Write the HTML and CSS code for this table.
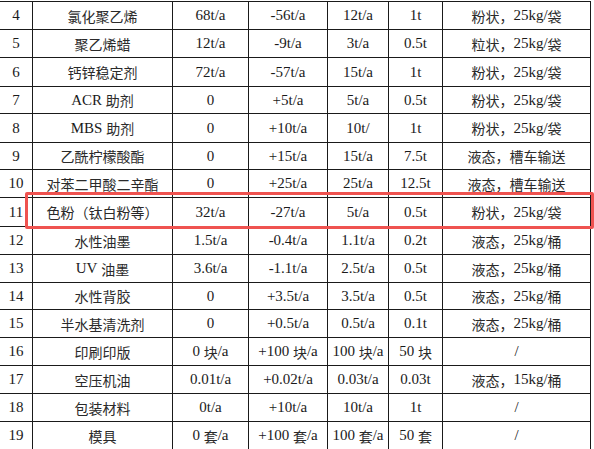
FILE: index.html
```html
<!DOCTYPE html>
<html lang="zh-CN">
<head>
<meta charset="utf-8">
<title>原辅材料表</title>
<link rel="stylesheet" href="styles.css">
</head>
<body>
<div class="sheet">
  <div class="table">
    <div class="c">4</div><div class="c"><span class="zh">氯化聚乙烯</span></div><div class="c">68t/a</div><div class="c">-56t/a</div><div class="c">12t/a</div><div class="c">1t</div><div class="c"><span class="zh">粉状，</span>25kg/<span class="zh">袋</span></div>
    <div class="c">5</div><div class="c"><span class="zh">聚乙烯蜡</span></div><div class="c">12t/a</div><div class="c">-9t/a</div><div class="c">3t/a</div><div class="c">0.5t</div><div class="c"><span class="zh">粒状，</span>25kg/<span class="zh">袋</span></div>
    <div class="c">6</div><div class="c"><span class="zh">钙锌稳定剂</span></div><div class="c">72t/a</div><div class="c">-57t/a</div><div class="c">15t/a</div><div class="c">1t</div><div class="c"><span class="zh">粉状，</span>25kg/<span class="zh">袋</span></div>
    <div class="c">7</div><div class="c">ACR&nbsp;<span class="zh">助剂</span></div><div class="c">0</div><div class="c">+5t/a</div><div class="c">5t/a</div><div class="c">0.5t</div><div class="c"><span class="zh">粉状，</span>25kg/<span class="zh">袋</span></div>
    <div class="c">8</div><div class="c">MBS&nbsp;<span class="zh">助剂</span></div><div class="c">0</div><div class="c">+10t/a</div><div class="c">10t/</div><div class="c">1t</div><div class="c"><span class="zh">粉状，</span>25kg/<span class="zh">袋</span></div>
    <div class="c">9</div><div class="c"><span class="zh">乙酰柠檬酸酯</span></div><div class="c">0</div><div class="c">+15t/a</div><div class="c">15t/a</div><div class="c">7.5t</div><div class="c"><span class="zh">液态，槽车输送</span></div>
    <div class="c">10</div><div class="c"><span class="zh">对苯二甲酸二辛酯</span></div><div class="c">0</div><div class="c">+25t/a</div><div class="c">25t/a</div><div class="c">12.5t</div><div class="c"><span class="zh">液态，槽车输送</span></div>
    <div class="c">11</div><div class="c"><span class="zh">色粉（钛白粉等）</span></div><div class="c">32t/a</div><div class="c">-27t/a</div><div class="c">5t/a</div><div class="c">0.5t</div><div class="c"><span class="zh">粉状，</span>25kg/<span class="zh">袋</span></div>
    <div class="c">12</div><div class="c"><span class="zh">水性油墨</span></div><div class="c">1.5t/a</div><div class="c">-0.4t/a</div><div class="c">1.1t/a</div><div class="c">0.2t</div><div class="c"><span class="zh">液态，</span>25kg/<span class="zh">桶</span></div>
    <div class="c">13</div><div class="c">UV&nbsp;<span class="zh">油墨</span></div><div class="c">3.6t/a</div><div class="c">-1.1t/a</div><div class="c">2.5t/a</div><div class="c">0.5t</div><div class="c"><span class="zh">液态，</span>25kg/<span class="zh">桶</span></div>
    <div class="c">14</div><div class="c"><span class="zh">水性背胶</span></div><div class="c">0</div><div class="c">+3.5t/a</div><div class="c">3.5t/a</div><div class="c">0.5t</div><div class="c"><span class="zh">液态，</span>25kg/<span class="zh">桶</span></div>
    <div class="c">15</div><div class="c"><span class="zh">半水基清洗剂</span></div><div class="c">0</div><div class="c">+0.5t/a</div><div class="c">0.5t/a</div><div class="c">0.1t</div><div class="c"><span class="zh">液态，</span>25kg/<span class="zh">桶</span></div>
    <div class="c">16</div><div class="c"><span class="zh">印刷印版</span></div><div class="c">0&nbsp;<span class="zh">块</span>/a</div><div class="c">+100&nbsp;<span class="zh">块</span>/a</div><div class="c">100&nbsp;<span class="zh">块</span>/a</div><div class="c">50&nbsp;<span class="zh">块</span></div><div class="c">/</div>
    <div class="c">17</div><div class="c"><span class="zh">空压机油</span></div><div class="c">0.01t/a</div><div class="c">+0.02t/a</div><div class="c">0.03t/a</div><div class="c">0.03t</div><div class="c"><span class="zh">液态，</span>15kg/<span class="zh">桶</span></div>
    <div class="c">18</div><div class="c"><span class="zh">包装材料</span></div><div class="c">0t/a</div><div class="c">+10t/a</div><div class="c">10t/a</div><div class="c">1t</div><div class="c">/</div>
    <div class="c">19</div><div class="c"><span class="zh">模具</span></div><div class="c">0&nbsp;<span class="zh">套</span>/a</div><div class="c">+100&nbsp;<span class="zh">套</span>/a</div><div class="c">100&nbsp;<span class="zh">套</span>/a</div><div class="c">50&nbsp;<span class="zh">套</span></div><div class="c">/</div>
  </div>
  <div class="highlight"></div>
</div>
</body>
</html>
```

FILE: styles.css
```css
html, body {
  margin: 0;
  padding: 0;
  background: #ffffff;
}

.sheet {
  position: relative;
  width: 594px;
  height: 449px;
  overflow: hidden;
}

.table {
  display: grid;
  grid-template-columns: 33px 140px 76px 79px 61px 54px 148px;
  grid-template-rows: 28px 28px 29px 27px 29px 27px 28px 29px 28px 28px 27px 28px 28px 28px 28px 28px;
  margin-top: 1px;
  border-top: 1px solid #1a1a1a;
  width: 591px;
  font-family: "Liberation Serif", "Noto Sans CJK SC", serif;
  font-size: 15px;
  color: #1a1a1a;
}

.c {
  box-sizing: border-box;
  display: flex;
  align-items: center;
  justify-content: center;
  border-right: 1px solid #1a1a1a;
  border-bottom: 1px solid #1a1a1a;
  white-space: nowrap;
  line-height: 1;
}

.zh {
  font-family: "Noto Sans CJK SC", sans-serif;
  font-size: 14px;
  color: #2a2a2a;
}

.highlight {
  position: absolute;
  left: 25px;
  top: 192px;
  width: 563px;
  height: 31px;
  border: 3px solid #ef5350;
  border-radius: 2px;
}
```
